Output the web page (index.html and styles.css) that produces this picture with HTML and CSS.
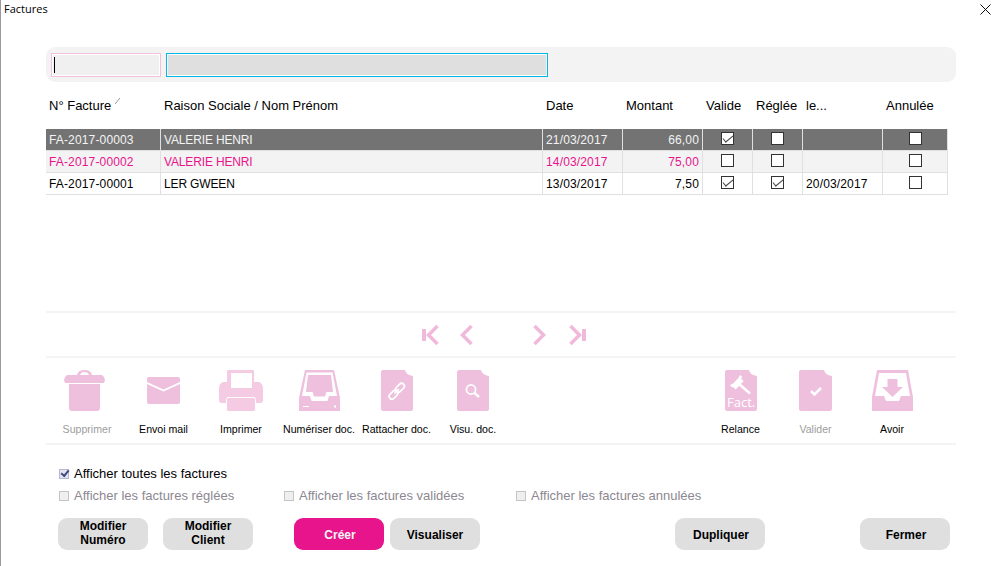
FILE: index.html
```html
<!DOCTYPE html>
<html lang="fr">
<head>
<meta charset="utf-8">
<title>Factures</title>
<link rel="stylesheet" href="styles.css">
</head>
<body>
<div class="window">
  <header class="titlebar">
    <span class="title">Factures</span>
    <svg class="close" viewBox="0 0 11 11" width="11" height="11"><path d="M.5.5l10 10M10.500.5l-10 10" stroke="#111" fill="none"/></svg>
  </header>
  <main class="content">
    <div class="filter">
      <div class="input-num"><span class="caret"></span></div>
      <div class="input-name"></div>
    </div>
    <div class="grid-wrap">
      <div class="row head">
        <div class="c1">N° Facture<svg class="sort" viewBox="0 0 5 6" width="5" height="6"><path d="M0 6L5 0" stroke="#999" fill="none"/></svg></div><div class="c2">Raison Sociale / Nom Prénom</div><div class="c3">Date</div><div class="c4">Montant</div><div class="c5">Valide</div><div class="c6">Réglée</div><div class="c7">le...</div><div class="c8">Annulée</div>
      </div>
      <div class="row item selected">
        <div class="c1">FA-2017-00003</div><div class="c2">VALERIE HENRI</div><div class="c3">21/03/2017</div><div class="c4 num">66,00</div>
        <div class="c5 mid"><span class="box on"></span></div><div class="c6 mid"><span class="box"></span></div><div class="c7"></div><div class="c8 mid"><span class="box"></span></div>
      </div>
      <div class="row item pink">
        <div class="c1">FA-2017-00002</div><div class="c2">VALERIE HENRI</div><div class="c3">14/03/2017</div><div class="c4 num">75,00</div>
        <div class="c5 mid"><span class="box"></span></div><div class="c6 mid"><span class="box"></span></div><div class="c7"></div><div class="c8 mid"><span class="box"></span></div>
      </div>
      <div class="row item">
        <div class="c1">FA-2017-00001</div><div class="c2">LER GWEEN</div><div class="c3">13/03/2017</div><div class="c4 num">7,50</div>
        <div class="c5 mid"><span class="box on"></span></div><div class="c6 mid"><span class="box on"></span></div><div class="c7">20/03/2017</div><div class="c8 mid"><span class="box"></span></div>
      </div>
    </div>
    <nav class="pager">
      <svg viewBox="0 0 18 22" width="18" height="22"><path class="pg-fill" d="M1 5h4v12H1z"/><path class="pg" d="M16.500 2l-9 9 9 9"/></svg>
      <svg class="p2" viewBox="0 0 16 22" width="16" height="22"><path class="pg" d="M13.500 2l-9 9 9 9"/></svg>
      <svg class="p3" viewBox="0 0 16 22" width="16" height="22"><path class="pg" d="M2.500 2l9 9-9 9"/></svg>
      <svg class="p4" viewBox="0 0 19 22" width="19" height="22"><path class="pg" d="M2.500 2l9 9-9 9"/><path class="pg-fill" d="M14 5h4v12h-4z"/></svg>
    </nav>
    <section class="actions">
      <div class="act muted">
        <svg class="trash" viewBox="0 0 41 41" width="41" height="41"><path class="f" d="M13 5Q14 0 20.500 0T28 5H25Q24 2 20.500 2T16 5ZM3 5H38Q41 7 41 10L40 13H1L0 10Q0 7 3 5ZM5 14H36V38Q36 41 33 41H8Q5 41 5 38Z"/></svg>
        <span>Supprimer</span>
      </div>
      <div class="act">
        <svg class="mail" viewBox="0 0 33 27" width="33" height="27"><path class="f" d="M2 0H31Q33 0 33 2V5L16.500 12.500 0 5V2Q0 0 2 0ZM0 7L16.500 14.500 33 7V25Q33 27 31 27H2Q0 27 0 25Z"/></svg>
        <span>Envoi mail</span>
      </div>
      <div class="act">
        <svg viewBox="0 0 44 41" width="44" height="41"><path class="lt" fill-rule="evenodd" d="M8 1q0-1 1-1h25q1 0 1 1v11h4q5 0 5 8v10q0 3-3 3h-5v-6H8v6H3q-3 0-3-3V20q0-8 5-8h3zM12 3v15h21V3z"/><rect class="lt tray" x="7.500" y="27.500" width="29" height="14" rx="2"/></svg>
        <span>Imprimer</span>
      </div>
      <div class="act">
        <svg viewBox="0 0 41 41" width="41" height="41"><path class="f" d="M6 0H35L41 28V41H0V28Z"/><path class="w" d="M7.500 2.500H33.500L38 26H30L28.500 31H12.500L11 26H3Z"/><path class="f" d="M9 5H32L34 22H27.500L26 26.500H15L13.500 22H7Z"/><path class="w" d="M4 36h6v1H4zM35 35.500h2v2h-2z"/></svg>
        <span>Numériser doc.</span>
      </div>
      <div class="act">
        <svg viewBox="0 0 32 41" width="32" height="41"><path class="f" d="M2 0H24Q25 5 32 6V39Q32 41 30 41H2Q0 41 0 39V2Q0 0 2 0Z"/><g class="ln"><rect x="7.500" y="22" width="10" height="5.500" rx="2.750" transform="rotate(-45 12.500 24.750)"/><rect x="14" y="15" width="10" height="5.500" rx="2.750" transform="rotate(-45 19 17.750)"/><path d="M13.500 23.500l4.500-4.500"/></g></svg>
        <span>Rattacher doc.</span>
      </div>
      <div class="act">
        <svg viewBox="0 0 32 41" width="32" height="41"><path class="f" d="M2 0H24Q25 5 32 6V39Q32 41 30 41H2Q0 41 0 39V2Q0 0 2 0Z"/><circle class="ln" cx="14" cy="19.500" r="4.600"/><path class="ln thick" d="M17.500 23l4.500 4"/></svg>
        <span>Visu. doc.</span>
      </div>
      <div class="spacer"></div>
      <div class="act">
        <svg viewBox="0 0 32 41" width="32" height="41"><path class="f" d="M2 0H24Q25 5 32 6V39Q32 41 30 41H2Q0 41 0 39V2Q0 0 2 0Z"/><path class="ln head-h" d="M8.500 17.500l8-8.500"/><path class="ln thick" d="M6 14.500l2 2M14.500 6l2 2M14 14l11 9.500"/><text x="2" y="37" class="fact">Fact.</text></svg>
        <span>Relance</span>
      </div>
      <div class="act muted">
        <svg viewBox="0 0 33 41" width="33" height="41"><path class="f" d="M2 0H25Q26 5 33 6V39Q33 41 31 41H2Q0 41 0 39V2Q0 0 2 0Z"/><path class="ln thick" d="M12 21l3.500 3.500L22 18"/></svg>
        <span>Valider</span>
      </div>
      <div class="act">
        <svg viewBox="0 0 41 41" width="41" height="41"><path class="f" d="M5 0H36L41 27V41H0V27Z"/><path class="w" d="M7 3H34L38 26H29L27 31H14L12 26H3Z"/><path class="f" d="M15.500 9H25.500V17H31L20.500 27 10 17H15.500Z"/></svg>
        <span>Avoir</span>
      </div>
    </section>
    <section class="options">
      <label class="opt main"><span class="cb checked"></span>Afficher toutes les factures</label>
      <div class="opt-row">
        <label class="opt o1"><span class="cb"></span>Afficher les factures réglées</label>
        <label class="opt o2"><span class="cb"></span>Afficher les factures validées</label>
        <label class="opt"><span class="cb"></span>Afficher les factures annulées</label>
      </div>
    </section>
    <footer class="buttons">
      <button class="btn two">Modifier<br>Numéro</button>
      <button class="btn two b2">Modifier<br>Client</button>
      <button class="btn primary one">Créer</button>
      <button class="btn b4 low">Visualiser</button>
      <button class="btn b5 one">Dupliquer</button>
      <button class="btn b6 one">Fermer</button>
    </footer>
  </main>
</div>
</body>
</html>
```
FILE: styles.css
```css
* { box-sizing: border-box; }
html, body { margin: 0; height: 100%; background: #fff; overflow: hidden; }
body { font-family: "Liberation Sans", Arial, sans-serif; font-size: 12px; color: #000; }
.window { width: 995px; height: 566px; border-left: 1px solid #9a9a9a; }
.titlebar { height: 47px; display: flex; justify-content: space-between; padding: 2px 4px 0 3px; }
.title { font-family: "Open Sans", sans-serif; font-size: 11px; line-height: 14px; }
.close { margin-top: 2px; }
.content { padding: 0 39px 0 45px; }
.filter { height: 35px; background: #f3f3f3; border-radius: 9px; display: flex; gap: 5px; padding: 6px 5px; }
.input-num { width: 110px; height: 24px; background: #f0f0f0; border: 1px solid #f2bfdf; box-shadow: inset 0 0 0 1px #fff; padding: 3px 2px; }
.caret { display: block; width: 1px; height: 16px; background: #000; }
.input-name { width: 382px; height: 24px; background: #dfdfdf; border: 1px solid #00b7ea; box-shadow: inset 0 0 0 1px #fff; }
.grid-wrap { width: 902px; margin-top: 12px; height: 217px; }
.row { display: grid; grid-template-columns: 115px 382px 80px 80px 50px 50px 80px 65px; }
.head { height: 35px; line-height: 24px; font-size: 13px; }
.head > div { padding-left: 3px; white-space: nowrap; }
.sort { margin: 0 0 6px 4px; }
.item { height: 22px; line-height: 22px; border-bottom: 1px solid #e0e0e0; }
.item > div { padding: 0 3px; border-right: 1px solid #e0e0e0; height: 21px; }
.item .c1, .item .c3, .item .c4, .item .c7 { letter-spacing: .15px; }
.item .c2 { letter-spacing: -.15px; }
.selected { background: #737373; color: #f4f4f4; }
.pink { background: #f3f3f3; color: #e8148c; }
.num { text-align: right; }
.mid { display: flex; justify-content: center; align-items: flex-start; padding-top: 3px !important; }
.box { display: block; width: 13px; height: 13px; border: 1px solid #333; background: #fff; }
.box.on::after { content: ""; display: block; width: 9px; height: 4px; border-left: 1px solid #444; border-bottom: 1px solid #444; transform: rotate(-40deg); margin: 2px 0 0 1px; }
.pager { height: 47px; border-top: 2px solid #f4f4f4; border-bottom: 2px solid #f4f4f4; display: flex; align-items: center; padding-left: 375px; }
.pg { fill: none; stroke: #f0b8da; stroke-width: 3.500; }
.pg-fill { fill: #f0b8da; }
.p2 { margin-left: 19px; }
.p3 { margin-left: 58px; }
.p4 { margin-left: 20px; }
.actions { height: 87px; border-bottom: 2px solid #f4f4f4; display: grid; grid-template-columns: 76px 77px 78px 78px 77px 76px 1fr 75px 75px 78px; padding: 12px 25px 0 3px; }
.act { display: flex; flex-direction: column; align-items: center; font-size: 10.600px; white-space: nowrap; }
.act svg { margin-bottom: 11px; }
.act .trash { margin-right: 5px; }
.act .mail { margin: 7px 0 18px; }
.act span { line-height: 14px; }
.muted { color: #9d9d9d; }
.f { fill: #efc0dd; }
.lt { fill: #f5cae3; }
.tray { stroke: #fff; stroke-width: 1; }
.w { fill: #fff; }
.ln { fill: none; stroke: #fff; stroke-width: 1.700; }
.ln.thick { stroke-width: 2.500; }
.ln.head-h { stroke-width: 6; }
.fact { font-family: "Open Sans", sans-serif; font-size: 13px; fill: #fff; }
.options { padding: 21px 0 0 13px; color: #8c8791; font-size: 13px; }
.opt { display: inline-flex; align-items: center; line-height: 14px; }
.main { color: #000; display: flex; height: 15px; }
.opt-row { display: flex; margin-top: 7px; height: 15px; }
.o1 { width: 225px; }
.o2 { width: 232px; }
.cb { width: 10px; height: 10px; border: 1px solid #c4c4c4; background: #efefef; margin-right: 5px; flex: none; position: relative; }
.checked { border-color: #b4b8d0; background: #e3e4f0; }
.checked::after { content: ""; position: absolute; left: 1px; top: 0; width: 6px; height: 3px; border-left: 2px solid #3f4a80; border-bottom: 2px solid #3f4a80; transform: rotate(-50deg); }
.buttons { display: flex; margin-top: 15px; padding-left: 12px; }
.btn { width: 90px; height: 32px; border: 0; border-radius: 9px; background: #dfdfdf; font: bold 12px/14px "Liberation Sans", Arial, sans-serif; color: #000; padding: 0; }
.two { padding-bottom: 2px; }
.one { padding: 2px 0 0 2px; }
.low { padding-top: 2px; }
.b2 { margin-left: 15px; }
.primary { margin-left: 41px; background: #e8148c; color: #f4f4f4; }
.b4 { margin-left: 6px; }
.b5 { margin-left: 195px; }
.b6 { margin-left: 95px; }
```
